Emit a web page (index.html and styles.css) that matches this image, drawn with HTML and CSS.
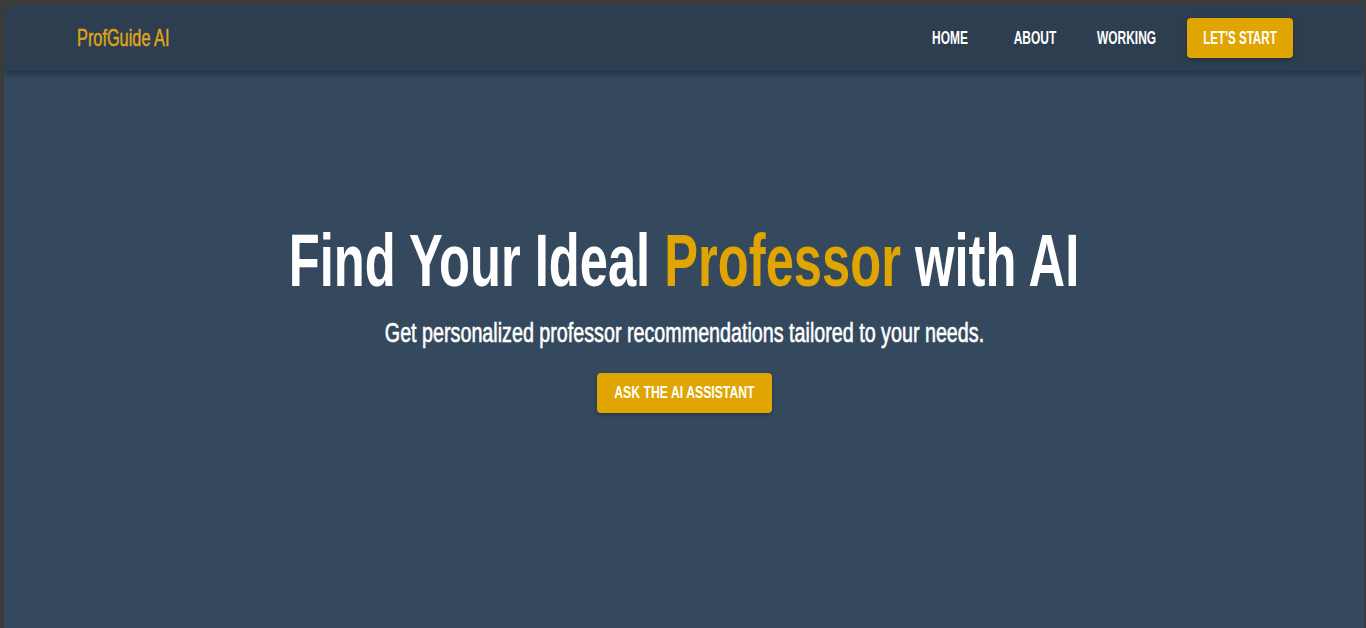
FILE: index.html
```html
<!DOCTYPE html>
<html lang="en">
<head>
<meta charset="utf-8">
<title>ProfGuide AI</title>
<link rel="stylesheet" href="styles.css">
</head>
<body>
<div class="frame">
  <div class="page">
    <header class="nav">
      <div class="brand"><span class="sq sq-brand">ProfGuide AI</span></div>
      <nav class="links">
        <a href="#" class="link link-home"><span class="sq sq-nav">HOME</span></a>
        <a href="#" class="link link-about"><span class="sq sq-nav">ABOUT</span></a>
        <a href="#" class="link link-working"><span class="sq sq-nav">WORKING</span></a>
        <a href="#" class="btn btn-nav"><span class="sq sq-navbtn">LET'S START</span></a>
      </nav>
    </header>
    <main class="hero">
      <h1 class="title"><span class="sq sq-title">Find Your Ideal <span class="accent">Professor</span> with AI</span></h1>
      <p class="subtitle"><span class="sq sq-sub">Get personalized professor recommendations tailored to your needs.</span></p>
      <a href="#" class="btn btn-hero"><span class="sq sq-btn">ASK THE AI ASSISTANT</span></a>
    </main>
  </div>
</div>
</body>
</html>
```

FILE: styles.css
```css
html, body {
  margin: 0;
  padding: 0;
  height: 100%;
}
body {
  background: #3b3b3b;
  font-family: "Liberation Sans", Arial, sans-serif;
  overflow: hidden;
}
.frame {
  height: 100%;
  box-sizing: border-box;
  padding: 5px 2px 0 4px;
}
.page {
  height: 100%;
  background: #34495e;
  border-radius: 9px 0 0 0;
  overflow: hidden;
  display: flex;
  flex-direction: column;
}

/* condensed look: horizontally squeezed text */
.sq {
  display: inline-block;
  white-space: nowrap;
  transform-origin: center center;
}
.sq-brand {
  transform: scaleX(0.68);
  transform-origin: left center;
  -webkit-text-stroke: 0.5px currentColor;
}
.sq-nav { transform: scaleX(0.665); }
.sq-navbtn { transform: scaleX(0.645); }
.sq-title { transform: scaleX(0.685); }
.sq-sub {
  transform: scaleX(0.73);
  -webkit-text-stroke: 0.6px currentColor;
}
.sq-btn { transform: scaleX(0.72); }

.nav {
  height: 66px;
  flex: none;
  background: #2d3e50;
  box-shadow: 0 3px 6px rgba(0,0,0,0.3);
  display: flex;
  align-items: center;
  justify-content: space-between;
  padding: 0 71px 0 73px;
  position: relative;
  z-index: 1;
}
.brand {
  color: #e0a41a;
  font-size: 24px;
  line-height: 24px;
}
.links {
  display: flex;
  align-items: center;
}
.link {
  display: flex;
  justify-content: center;
  color: #ffffff;
  text-decoration: none;
  font-size: 18px;
  font-weight: bold;
  line-height: 20px;
}
.link-home { width: 36px; margin-right: 46px; }
.link-about { width: 42px; margin-right: 40px; }
.link-working { width: 61px; margin-right: 30px; }

.btn {
  display: flex;
  align-items: center;
  justify-content: center;
  background: #e0a500;
  color: #ffffff;
  text-decoration: none;
  border-radius: 4px;
  box-shadow: 0 2px 4px rgba(0,0,0,0.25);
  font-weight: bold;
}
.btn-nav {
  width: 106px;
  height: 40px;
  font-size: 18px;
}
.hero {
  flex: 1;
  display: flex;
  flex-direction: column;
  align-items: center;
  padding-top: 150px;
  color: #ffffff;
}
.title {
  margin: 0;
  font-size: 74px;
  font-weight: bold;
  line-height: 80px;
}
.accent {
  color: #e0a500;
}
.subtitle {
  margin: 15px 0 0;
  font-size: 27px;
  line-height: 34px;
}
.btn-hero {
  margin-top: 23px;
  width: 175px;
  height: 40px;
  font-size: 17px;
}
```
